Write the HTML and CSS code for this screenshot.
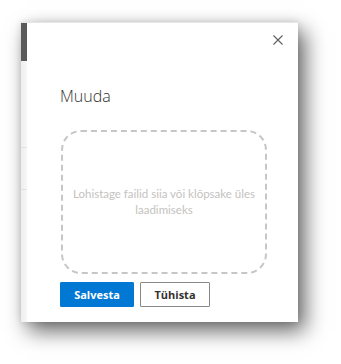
FILE: index.html
```html
<!DOCTYPE html>
<html lang="et">
<head>
<meta charset="utf-8">
<link rel="stylesheet" href="styles.css">
</head>
<body>
<div class="shot">
  <div class="behind">
    <div class="behind-bar"></div>
    <div class="behind-line l1"></div>
    <div class="behind-line l2"></div>
  </div>
  <div class="panel">
    <div class="head">
      <button class="close" aria-label="Sulge">
        <svg width="10" height="10" viewBox="0 0 10 10"><path d="M0.5 0.5 L9.5 9.5 M9.5 0.5 L0.5 9.5" stroke="#605e5c" stroke-width="1.1" fill="none"/></svg>
      </button>
    </div>
    <h1 class="title">Muuda</h1>
    <div class="drop">
      <p class="drop-text">Lohistage failid siia või klõpsake üles laadimiseks</p>
    </div>
    <div class="actions">
      <button class="btn primary">Salvesta</button>
      <button class="btn secondary">Tühista</button>
    </div>
  </div>
</div>
</body>
</html>
```

FILE: styles.css
```css
html, body {
  margin: 0;
  padding: 0;
  background: #ffffff;
}
body {
  width: 341px;
  height: 364px;
  overflow: hidden;
  font-family: "Open Sans", "Noto Sans", sans-serif;
}
.shot {
  margin: 22px 0 0 21px;
  width: 277px;
  height: 300px;
  display: flex;
  box-shadow: 7px 9px 20px rgba(0,0,0,0.6), 0 0 7px rgba(0,0,0,0.12);
  border-top: 1px solid #e6e6e6;
  box-sizing: border-box;
}
.behind {
  width: 6px;
  background: linear-gradient(to right, #eeeeee, #f7f7f7);
  display: flex;
  flex-direction: column;
}
.behind-bar {
  height: 38px;
  background: #5a5a5a;
}
.behind-line {
  height: 1px;
  background: #e2e2e2;
}
.l1 { margin-top: 86px; }
.l2 { margin-top: 41px; }
.panel {
  flex: 1;
  background: #ffffff;
  display: flex;
  flex-direction: column;
  padding: 0 0 0 33px;
}
.head {
  display: flex;
  justify-content: flex-end;
  padding: 12px 15px 0 0;
}
.close {
  border: 0;
  background: none;
  padding: 0;
  width: 10px;
  height: 10px;
  display: flex;
}
.title {
  margin: 41px 0 0 0;
  font-weight: 300;
  font-size: 16px;
  line-height: 20px;
  color: #323130;
}
.drop {
  margin: 24px 0 0 1px;
  width: 206px;
  height: 144px;
  box-sizing: border-box;
  border: 2px dashed #c8c6c4;
  border-radius: 20px;
  display: flex;
  align-items: center;
  justify-content: center;
}
.drop-text {
  margin: 0;
  font-family: "Lato", "Open Sans", sans-serif;
  font-size: 11.5px;
  line-height: 16px;
  color: #c4c2c0;
  text-align: center;
  padding: 0;
}
.actions {
  display: flex;
  gap: 6px;
  margin-top: 8px;
}
.btn {
  height: 25px;
  box-sizing: border-box;
  font-family: "Open Sans", sans-serif;
  font-weight: 700;
  font-size: 11px;
  padding: 0;
  border-radius: 1px;
}
.primary {
  width: 74px;
  background: #0078d4;
  border: 1px solid #0078d4;
  color: #ffffff;
}
.secondary {
  width: 70px;
  background: #ffffff;
  border: 1px solid #8a8886;
  color: #323130;
}
```
